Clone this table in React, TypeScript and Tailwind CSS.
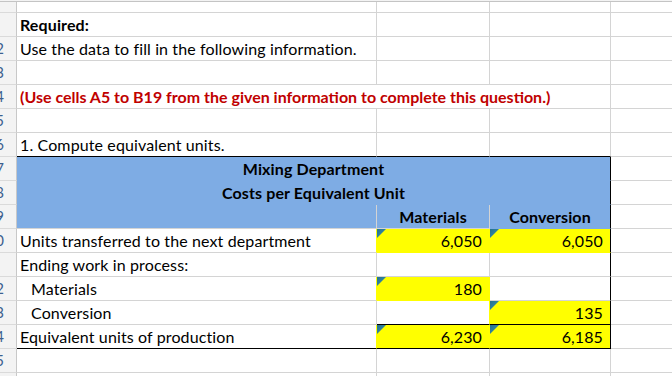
import React from 'react';

// Excel-like sheet: Mixing Department equivalent units
const base = 'relative h-full shrink-0 border-r border-b border-[#d4d4d4] flex items-end pb-[2px] whitespace-nowrap';

const Tri: React.FC = () => (
  <svg className="absolute left-0 top-0" width="9" height="9" viewBox="0 0 9 9">
    <defs>
      <linearGradient id="tri" x1="0" y1="0" x2="1" y2="1">
        <stop offset="0%" stopColor="#25708e" />
        <stop offset="60%" stopColor="#3286a3" />
        <stop offset="100%" stopColor="#9cc8d6" />
      </linearGradient>
    </defs>
    <polygon points="0,0 9,0 0,9" fill="url(#tri)" />
  </svg>
);

// row numbers are scrolled mostly out of view, only the last digit peeks in
const Head: React.FC<{ n: string }> = ({ n }) => (
  <div className="h-full w-[17px] shrink-0 bg-[#f3f3f3] border-r border-b border-r-[#c8c8c8] border-b-[#dadada] flex items-end justify-end overflow-hidden pr-[12px] pb-[2px] text-[15px] text-[#3d5f8f]">
    {n}
  </div>
);

const Row: React.FC<{ n: string; h?: string; children?: React.ReactNode }> = ({
  n,
  h = 'h-[24px]',
  children,
}) => (
  <div className={`flex ${h}`}>
    <Head n={n} />
    {children}
    <div className="h-full flex-1 border-b border-[#d4d4d4]" />
  </div>
);

// plain three cells, text in A
const Plain: React.FC<{ children?: React.ReactNode; className?: string; rule?: boolean }> = ({
  children,
  className = '',
  rule = false,
}) => {
  const b = rule ? 'border-b-black' : '';
  return (
    <>
      <div className={`${base} w-[360px] pl-[3px] ${b} ${className}`}>{children}</div>
      <div className={`${base} w-[113px] ${b}`} />
      <div className={`${base} w-[121px] ${b}`} />
    </>
  );
};

export default function App() {
  return (
    <div className="w-[672px] h-[376px] overflow-hidden bg-white text-black text-[16px] leading-[19px] tracking-[0.12px] [font-family:Lato,'Liberation_Sans',sans-serif]">
      <div className="h-[2px] bg-[#f3f3f3] border-b border-[#c4c4c4]" />
      <Row n="" h="h-[11px]">
        <Plain />
      </Row>
      <Row n="">
        <Plain className="font-bold">Required:</Plain>
      </Row>
      <Row n="12">
        <Plain>Use the data to fill in the following information.</Plain>
      </Row>
      <Row n="13">
        <Plain />
      </Row>
      <Row n="14">
        <div className={`${base} w-[594px] pl-[3px] font-bold tracking-normal text-[#c00000]`}>
          (Use cells A5 to B19 from the given information to complete this question.)
        </div>
      </Row>
      <Row n="15">
        <Plain />
      </Row>
      <Row n="16">
        <Plain rule>1. Compute equivalent units.</Plain>
      </Row>

      {/* blue heading block */}
      <Row n="17">
        <div className={`${base} w-[594px] justify-center bg-[#7eace4] border-b-[#7eace4] border-r-black font-bold`}>
          Mixing Department
        </div>
      </Row>
      <Row n="18">
        <div className={`${base} w-[594px] justify-center bg-[#7eace4] border-b-[#7eace4] border-r-black font-bold`}>
          Costs per Equivalent Unit
        </div>
      </Row>
      <Row n="19">
        <div className={`${base} w-[360px] bg-[#7eace4] border-[#7eace4]`} />
        <div className={`${base} w-[113px] justify-center bg-[#7eace4] border-[#7eace4] font-bold`}>Materials</div>
        <div className={`${base} w-[121px] justify-center bg-[#7eace4] border-b-[#7eace4] border-r-black font-bold`}>
          Conversion
        </div>
      </Row>

      <Row n="20">
        <div className={`${base} w-[360px] pl-[3px] border-r-[#ffff00]`}>Units transferred to the next department</div>
        <div className={`${base} w-[113px] justify-end pr-[7px] bg-[#ffff00] border-[#ffff00]`}>
          <Tri />
          6,050
        </div>
        <div className={`${base} w-[121px] justify-end pr-[7px] bg-[#ffff00] border-b-[#ffff00] border-r-black`}>
          <Tri />
          6,050
        </div>
      </Row>
      <Row n="">
        <div className={`${base} w-[360px] pl-[3px]`}>Ending work in process:</div>
        <div className={`${base} w-[113px]`} />
        <div className={`${base} w-[121px] border-r-black`} />
      </Row>
      <Row n="22">
        <div className={`${base} w-[360px] pl-[14px] border-r-[#ffff00]`}>Materials</div>
        <div className={`${base} w-[113px] justify-end pr-[7px] bg-[#ffff00] border-[#ffff00]`}>
          <Tri />
          180
        </div>
        <div className={`${base} w-[121px] border-r-black`} />
      </Row>
      <Row n="23">
        <div className={`${base} w-[360px] pl-[14px]`}>Conversion</div>
        <div className={`${base} w-[113px] border-r-[#ffff00] border-b-black`} />
        <div className={`${base} w-[121px] justify-end pr-[7px] bg-[#ffff00] border-r-black border-b-black`}>
          <Tri />
          135
        </div>
      </Row>
      <Row n="24">
        <div className={`${base} w-[360px] pl-[3px] border-r-[#ffff00] border-b-black`}>Equivalent units of production</div>
        <div className={`${base} w-[113px] justify-end pr-[7px] bg-[#ffff00] border-r-[#ffff00] border-b-black`}>
          <Tri />
          6,230
        </div>
        <div className={`${base} w-[121px] justify-end pr-[7px] bg-[#ffff00] border-r-black border-b-black`}>
          <Tri />
          6,185
        </div>
      </Row>
      <Row n="25">
        <Plain />
      </Row>
      <Row n="">
        <Plain />
      </Row>
    </div>
  );
}
